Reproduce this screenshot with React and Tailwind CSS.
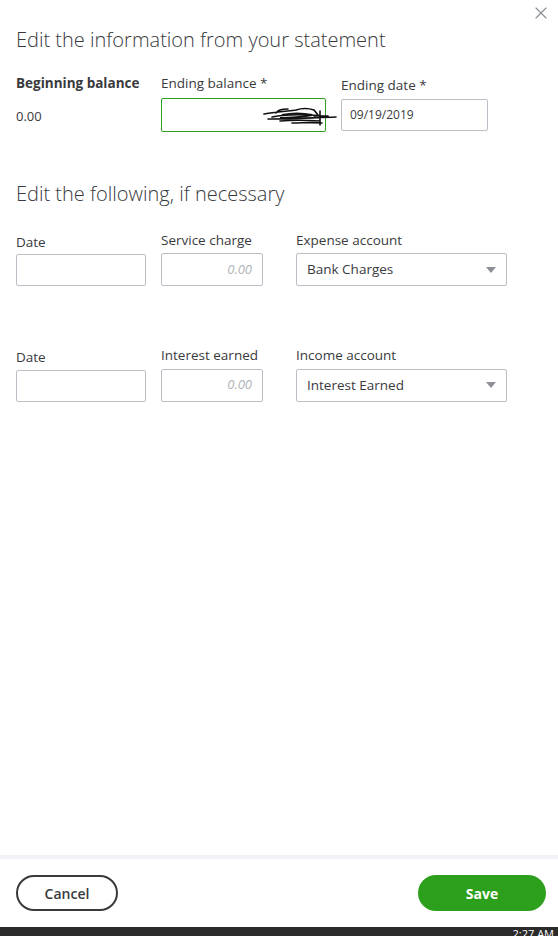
import { X } from 'lucide-react'

const font = { fontFamily: '"Open Sans", "Liberation Sans", sans-serif' }

function Label({ children, className = '' }) {
  return <div className={`text-[13.5px] text-[#393a3d] leading-none ${className}`}>{children}</div>
}

function Select({ value }) {
  return (
    <div className="w-[211px] h-[33px] border border-[#babec5] rounded-[2px] flex items-center justify-between pl-[10px] pr-[10px] text-[13.5px] text-[#393a3d]">
      <span>{value}</span>
      <svg width="10" height="6" viewBox="0 0 10 6"><path d="M0 0h10L5 6z" fill="#8d9096" /></svg>
    </div>
  )
}

function ChargeRow({ label, account, value }) {
  return (
    <div className="flex items-end">
      <div className="w-[145px]">
        <Label className="mb-[5px]">Date</Label>
        <div className="w-[130px] h-[32px] border border-[#babec5] rounded-[2px]" />
      </div>
      <div className="w-[135px]">
        <Label className="mb-[6px]">{label}</Label>
        <div className="w-[102px] h-[33px] border border-[#babec5] rounded-[2px] flex items-center justify-end pr-[10px] text-[13px] italic text-[#b0b3b8]">
          0.00
        </div>
      </div>
      <div>
        <Label className="mb-[6px]">{account}</Label>
        <Select value={value} />
      </div>
    </div>
  )
}

export default function App() {
  return (
    <div className="w-[558px] h-[936px] flex flex-col bg-white" style={font}>
      <div className="flex-1 relative px-4">
        <button type="button" className="absolute right-[7px] top-[3px] text-[#8d9096]">
          <X size={20} strokeWidth={1.4} />
        </button>

        <h1 className="pt-[30px] text-[20px] font-light text-[#393a3d] leading-none">
          Edit the information from your statement
        </h1>

        <div className="flex mt-[27px]">
          <div className="w-[145px]">
            <div className="text-[13.5px] font-bold text-[#393a3d] leading-none">Beginning balance</div>
            <div className="mt-[16px] text-[13px] text-[#393a3d]">0.00</div>
          </div>
          <div className="w-[180px]">
            <Label className="mb-[7px]">Ending balance *</Label>
            <div className="relative w-[165px] h-[34px] border border-[#2ca01c] rounded-[2px]">
              <svg className="absolute left-[100px] top-[6px]" width="75" height="22" viewBox="0 0 75 22">
                <path d="M2 9 C 14 7, 26 6, 34 5 C 40 3, 46 3, 52 5 L 56 10 M 14 8 C 16 4, 22 4, 26 4 M 10 12 C 20 10, 40 9, 62 11 M 6 14 C 24 14, 44 13, 74 12 M 18 16 C 30 15, 42 15, 58 16 M 30 18 C 40 18, 50 17, 60 18 M 58 6 L 58 20 M 52 11 L 66 11" stroke="#111" strokeWidth="1.6" fill="none" strokeLinecap="round" />
                <path d="M 20 10 C 30 8, 40 8, 50 10 C 40 12, 30 13, 18 13" stroke="#111" strokeWidth="2.2" fill="none" />
              </svg>
            </div>
          </div>
          <div className="pt-[2px]">
            <Label className="mb-[6px]">Ending date *</Label>
            <div className="w-[147px] h-[32px] border border-[#babec5] rounded-[2px] flex items-center pl-[8px] text-[12px] text-[#393a3d]">
              09/19/2019
            </div>
          </div>
        </div>

        <h2 className="mt-[52px] text-[20px] font-light text-[#393a3d] leading-none">
          Edit the following, if necessary
        </h2>

        <div className="mt-[30px]">
          <ChargeRow label="Service charge" account="Expense account" value="Bank Charges" />
        </div>
        <div className="mt-[63px]">
          <ChargeRow label="Interest earned" account="Income account" value="Interest Earned" />
        </div>
      </div>

      <div className="h-[4px] bg-[#f1f2f5]" />
      <div className="h-[68px] flex items-center justify-between px-4">
        <button type="button" className="w-[102px] h-[36px] rounded-full border-2 border-[#393a3d] text-[14px] font-semibold text-[#393a3d]">
          Cancel
        </button>
        <button type="button" className="w-[128px] h-[36px] rounded-full bg-[#2ca01c] text-[14px] font-bold text-white mr-[-4px]">
          Save
        </button>
      </div>
      <div className="h-[9px] bg-[#2b2b2b] relative overflow-hidden">
        <span className="absolute right-[4px] top-[1px] text-[11px] text-white leading-none">2:27 AM</span>
      </div>
    </div>
  )
}
